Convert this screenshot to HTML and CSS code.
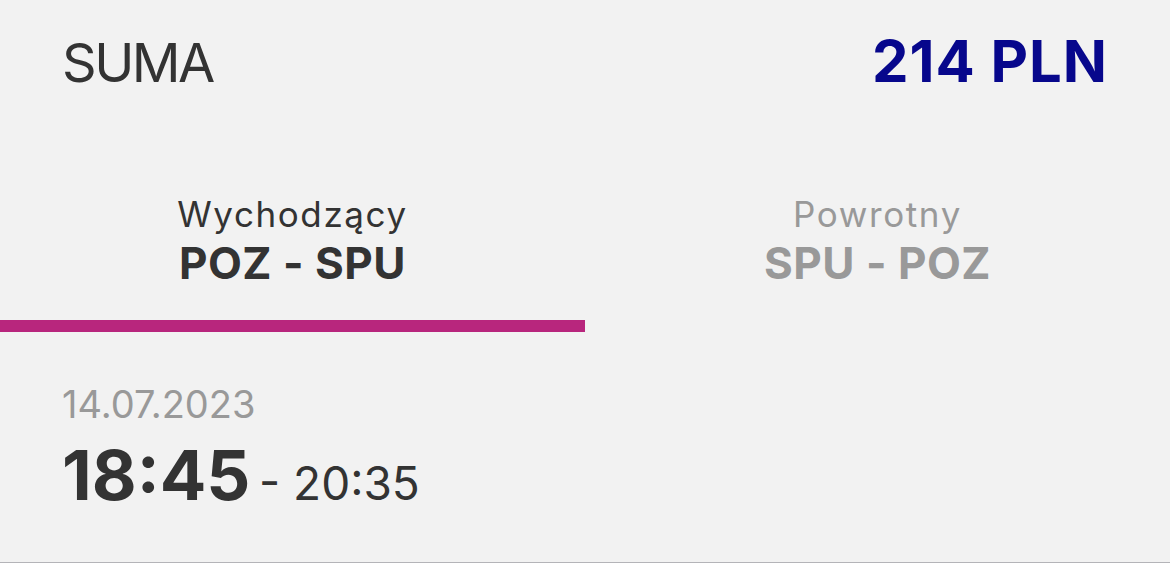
FILE: index.html
```html
<!DOCTYPE html>
<html lang="pl">
<head>
  <meta charset="UTF-8">
  <meta name="viewport" content="width=device-width, initial-scale=1.0">
  <title>Podsumowanie lotu</title>
  <link rel="stylesheet" href="styles.css">
</head>
<body>
  <main class="sheet">
    <header class="total">
      <span class="total-label">SUMA</span>
      <span class="total-price">214 PLN</span>
    </header>

    <nav class="tabs">
      <div class="tab active">
        <span class="tab-title">Wychodzący</span>
        <span class="tab-route">POZ - SPU</span>
      </div>
      <div class="tab">
        <span class="tab-title">Powrotny</span>
        <span class="tab-route">SPU - POZ</span>
      </div>
    </nav>

    <section class="flight">
      <div class="flight-date">14.07.2023</div>
      <div class="flight-time">
        <span class="dep">18:45</span>
        <span class="arr">- 20:35</span>
      </div>
    </section>
  </main>
  <div class="rest"></div>
</body>
</html>
```

FILE: styles.css
```css
:root {
  --clr-bg: #f2f2f2;
  --clr-text: #333;
  --clr-muted: #999;
  --clr-navy: #07078c;
  --clr-accent: #b8267d;
}

* {
  padding: 0;
  margin: 0;
  box-sizing: border-box;
}

html {
  font-family: Inter, 'Noto Sans', sans-serif;
  line-height: 1;
}

body {
  background-color: #fff;
  color: var(--clr-text);
}

.sheet {
  background-color: var(--clr-bg);
  height: 563px;
  border-bottom: 1px solid #b4b4b8;
}

.rest {
  height: 8px;
}

/* total price row */
.total {
  display: flex;
  justify-content: space-between;
  align-items: baseline;
  padding: 32px 62px 0;
}

.total-label {
  font-size: 54px;
  letter-spacing: -2.5px;
}

.total-price {
  font-size: 58px;
  font-weight: 700;
  letter-spacing: 1px;
  color: var(--clr-navy);
}

/* direction tabs */
.tabs {
  display: grid;
  grid-template-columns: 585px 1fr;
  margin-top: 107px;
}

.tab {
  display: flex;
  flex-direction: column;
  align-items: center;
  color: var(--clr-muted);
  padding-bottom: 35px;
  border-bottom: 12px solid transparent;
}

.tab.active {
  color: var(--clr-text);
  border-bottom-color: var(--clr-accent);
}

.tab-title {
  font-size: 35px;
  letter-spacing: 1.6px;
}

.tab-route {
  font-size: 44px;
  font-weight: 700;
  letter-spacing: .5px;
  margin-top: 9px;
}

/* selected flight */
.flight {
  padding: 53px 62px 0;
}

.flight-date {
  font-size: 38px;
  color: var(--clr-muted);
}

.flight-time {
  margin-top: 18px;
}

.dep {
  font-size: 69px;
  font-weight: 700;
}

.arr {
  font-size: 46px;
  margin-left: 4px;
}
```
